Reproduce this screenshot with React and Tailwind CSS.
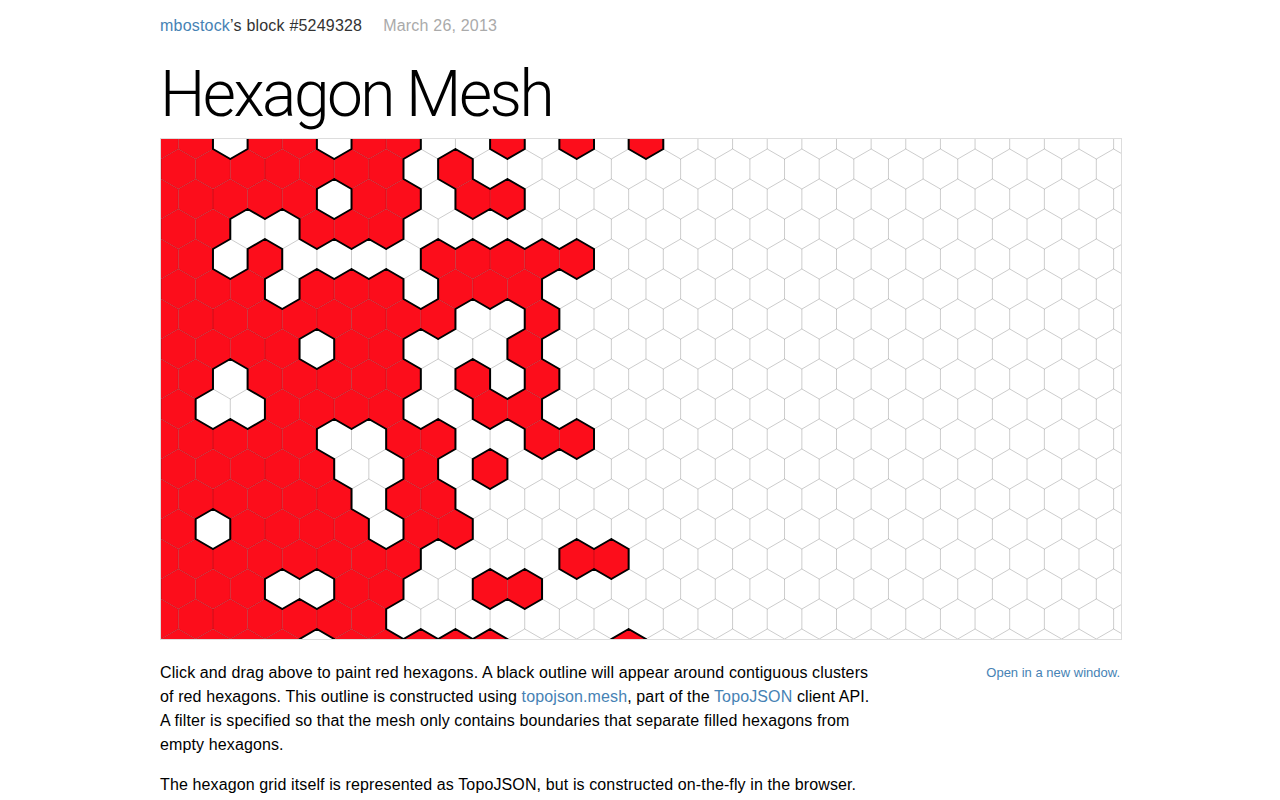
const RADIUS = 20;
const DX = RADIUS * 2 * Math.sin(Math.PI / 3);
const DY = RADIUS * 1.5;
const COLS = 29;
const ROWS = 18;

// red cells per row (row 0 = top, odd rows shifted half a cell right)
const FILLED = [
  [0, 1, 3, 4, 6, 7, 10, 12, 14],
  [0, 1, 2, 3, 4, 5, 6, 8],
  [0, 1, 2, 3, 4, 6, 7, 9, 10],
  [0, 1, 4, 5, 6],
  [0, 1, 3, 8, 9, 10, 11, 12],
  [0, 1, 2, 4, 5, 6, 8, 9, 10],
  [0, 1, 2, 3, 4, 5, 6, 7, 8, 11],
  [0, 1, 2, 3, 5, 6, 10],
  [0, 1, 3, 4, 5, 6, 7, 9, 11],
  [0, 3, 4, 5, 6, 9, 10],
  [0, 1, 2, 3, 4, 7, 8, 11, 12],
  [0, 1, 2, 3, 4, 7, 9],
  [0, 1, 2, 3, 4, 5, 7, 8],
  [0, 2, 3, 4, 5, 7, 8],
  [0, 1, 2, 3, 4, 5, 6, 7, 12, 13],
  [0, 1, 2, 5, 6, 9, 10],
  [0, 1, 2, 3, 4, 5, 6],
  [0, 1, 2, 3, 5, 6, 7, 8, 9, 13],
];

function buildGrid() {
  const hexes = [];
  const edges = new Map();
  for (let r = 0; r < ROWS; r++) {
    for (let i = 0; i < COLS; i++) {
      const cx = (i + (r & 1) / 2) * DX;
      const cy = r * DY;
      const pts = [
        [cx, cy - 20],
        [cx + DX / 2, cy - 10],
        [cx + DX / 2, cy + 10],
        [cx, cy + 20],
        [cx - DX / 2, cy + 10],
        [cx - DX / 2, cy - 10],
      ];
      const fill = FILLED[r].includes(i);
      hexes.push({ pts, fill });
      for (let k = 0; k < 6; k++) {
        const a = pts[k];
        const b = pts[(k + 1) % 6];
        const ka = `${a[0].toFixed(1)},${a[1].toFixed(1)}`;
        const kb = `${b[0].toFixed(1)},${b[1].toFixed(1)}`;
        const key = ka < kb ? ka + '|' + kb : kb + '|' + ka;
        if (!edges.has(key)) edges.set(key, { a, b, fills: [] });
        edges.get(key).fills.push(fill);
      }
    }
  }
  let mesh = '';
  let border = '';
  edges.forEach(({ a, b, fills }) => {
    const seg = `M${a[0].toFixed(2)},${a[1].toFixed(2)}L${b[0].toFixed(2)},${b[1].toFixed(2)}`;
    mesh += seg;
    // outline only where a filled cell meets an empty one
    if (fills.length === 2 && fills[0] !== fills[1]) border += seg;
  });
  return { hexes, mesh, border };
}

const grid = buildGrid();

const HexMesh = () => (
  <svg width="960" height="500" viewBox="0 0 960 500" className="block">
    {grid.hexes.map((h, idx) => (
      <polygon
        key={idx}
        points={h.pts.map((p) => p.join(',')).join(' ')}
        fill={h.fill ? '#fc0d1b' : '#ffffff'}
      />
    ))}
    <path d={grid.mesh} fill="none" stroke="#000" strokeOpacity="0.2" />
    <path d={grid.border} fill="none" stroke="#000" strokeWidth="2" strokeLinecap="round" strokeLinejoin="round" />
  </svg>
);

export default function App() {
  return (
    <div className="min-h-screen bg-white text-black font-['Liberation_Sans',Arial,sans-serif]">
      <div className="w-[960px] mx-auto pt-[17px]">
        <header className="text-[16px] leading-[18px] tracking-[0.2px] text-[#333]">
          <a className="text-[#4682b4]">mbostock</a>’s block <a className="text-[#333]">#5249328</a>
          <span className="ml-[21px] text-[#aaa]">March 26, 2013</span>
        </header>

        <h1 className="mt-[22px] mb-[6px] font-['Roboto',sans-serif] font-light text-[64px] leading-[75px] tracking-[-2.5px] text-black">
          Hexagon Mesh
        </h1>

        <div className="w-[962px] border border-[#ddd] bg-white">
          <HexMesh />
        </div>

        <div className="flex justify-between mt-[21px]">
          <div className="w-[720px] text-[16px] leading-[24px] tracking-[0.12px]">
            <p className="whitespace-nowrap">
              Click and drag above to paint red hexagons. A black outline will appear around contiguous clusters
              <br />
              of red hexagons. This outline is constructed using <a className="text-[#4682b4]">topojson.mesh</a>, part of the{' '}
              <a className="text-[#4682b4]">TopoJSON</a> client API.
              <br />
              A filter is specified so that the mesh only contains boundaries that separate filled hexagons from
              <br />
              empty hexagons.
            </p>
            <p className="mt-4 whitespace-nowrap">
              The hexagon grid itself is represented as TopoJSON, but is constructed on-the-fly in the browser.
            </p>
          </div>
          <aside className="w-[180px] text-right text-[13px] leading-[24px] text-[#4682b4]">
            Open in a new window.
          </aside>
        </div>
      </div>
    </div>
  );
}
